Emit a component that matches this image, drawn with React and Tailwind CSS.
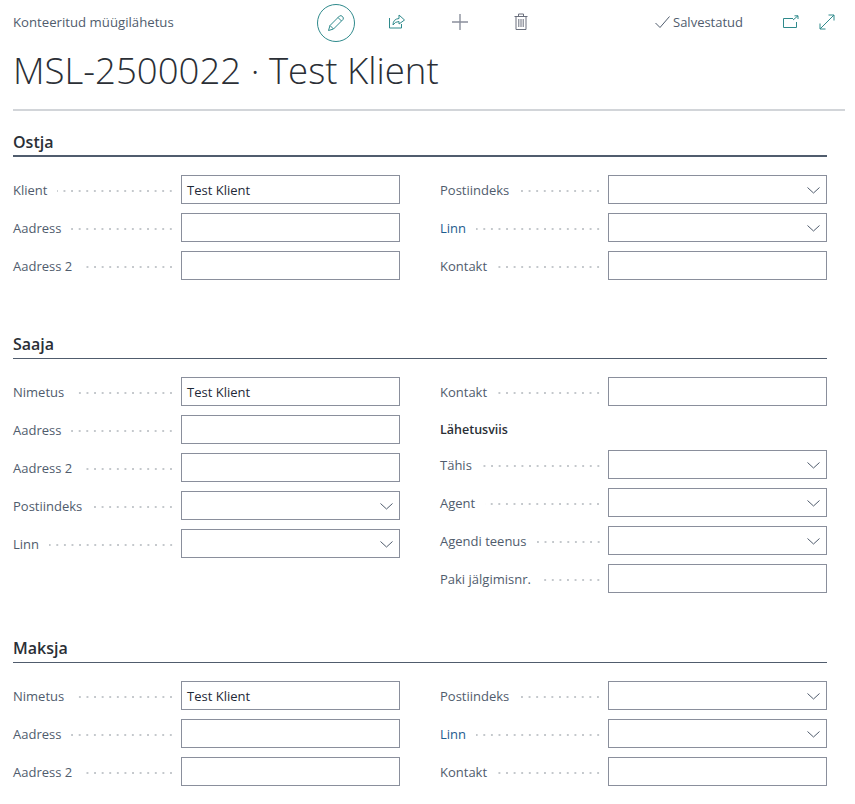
import React from 'react';

const Field = ({ label, value, lookup, link }) => (
    <div className="flex items-center h-[29px] mb-[9px]">
        <div className="w-[168px] shrink-0 flex items-center pr-[6px]">
            <span className={`text-[13px] pt-[2px] whitespace-nowrap ${link ? 'text-[#1d5c8f]' : 'text-[#505c6d]'}`}>{label}</span>
            <span className="flex-1 ml-[10px] mt-[2px] h-[2px] bg-[radial-gradient(circle,#c4c8cc_1px,transparent_1px)] bg-[length:7.6px_2px] bg-right" />
        </div>
        <div className="relative flex-1 h-[29px] border border-[#8a8f9c] flex items-center pl-[5px] text-[13px] text-[#1f2a38]">
            <span className="pt-[2px]">{value}</span>
            {lookup && (
                <svg className="absolute right-[6px] top-[8px]" width="13" height="12" viewBox="0 0 13 12" fill="none" stroke="#505c6d" strokeWidth="1">
                    <path d="M0.5 3.5 L6.5 9 L12.5 3.5" />
                </svg>
            )}
        </div>
    </div>
);

const Section = ({ title, left, right, className, thick }) => (
    <div className={className}>
        <div className={`flex items-end text-[16px] leading-[21px] font-semibold text-[#2b2f36] mb-[18px] border-[#505c6d] ${thick ? 'h-[27px] border-b-2 pb-[2px]' : 'h-[26px] border-b pb-[3px]'}`}>
            {title}
        </div>
        <div className="grid grid-cols-2 gap-x-[40px]">
            <div>{left.map((f, i) => <Field key={i} {...f} />)}</div>
            <div>{right.map((f, i) => (
                f.heading
                    ? <div key={i} className="h-[28px] mb-[7px] pt-[2px] flex items-center text-[12.5px] font-semibold text-[#2b2f36]">{f.heading}</div>
                    : <Field key={i} {...f} />
            ))}</div>
        </div>
    </div>
);

const App = () => {
    return (
        <div className="w-[855px] h-[804px] overflow-hidden bg-white font-['Open_Sans',sans-serif]">
            {/* Header */}
            <div className="ml-[13px] mr-[10px] h-[111px] border-b-2 border-[#d2d5d9]">
                <div className="flex items-center h-[44px] pt-[1px]">
                    <span className="w-[304px] text-[13.2px] text-[#505c6d] pt-[1px]">Konteeritud müügilähetus</span>
                    <div className="w-[38px] h-[38px] rounded-full border border-[#2f8a8c] flex items-center justify-center">
                        <svg width="18" height="18" viewBox="0 0 18 18" fill="none" stroke="#2f8a8c" strokeWidth="1">
                            <path d="M1.5 16.5 L3 11.5 L12.5 2 Q14 1 15.5 2.5 Q17 4 16 5.5 L6.5 15 Z M3 11.5 L6.5 15 M11 3.5 L14.5 7" />
                        </svg>
                    </div>
                    <svg className="ml-[33px] mb-[3px]" width="18" height="18" viewBox="0 0 18 18" fill="none" stroke="#2f8a8c" strokeWidth="1">
                        <path d="M1.5 6 V16 H13.5 V12 M5 13 Q5 7 11 6.5 V3 L16.5 8 L11 12 V9.5 Q7 9.5 5 13 Z" />
                    </svg>
                    <svg className="ml-[45px] mb-[2px]" width="18" height="18" viewBox="0 0 18 18" fill="none" stroke="#8a8f9c" strokeWidth="1.4">
                        <path d="M1 9 H17 M9 1 V17" />
                    </svg>
                    <svg className="ml-[45px] mb-[2px]" width="14" height="18" viewBox="0 0 14 18" fill="none" stroke="#6a6f7c" strokeWidth="1">
                        <path d="M0.5 3.5 H13.5 M4.5 3.5 V1 H9.5 V3.5 M2 3.5 V16.5 H12 V3.5 M4.8 6 V14 M7 6 V14 M9.2 6 V14" />
                    </svg>
                    <svg className="ml-[127px] mb-[2px]" width="15" height="14" viewBox="0 0 15 14" fill="none" stroke="#505c6d" strokeWidth="1">
                        <path d="M0.5 8 L5 12.5 L14.5 1.5" />
                    </svg>
                    <span className="ml-[3px] text-[13px] text-[#505c6d] pt-[1px]">Salvestatud</span>
                    <svg className="ml-[40px] mb-[2px]" width="16" height="14" viewBox="0 0 16 14" fill="none" stroke="#2f8a8c" strokeWidth="1">
                        <path d="M10 3.5 H0.5 V12.5 H13.5 V7 M10 5 L15 0.8 M11.5 0.8 H15 V4" />
                    </svg>
                    <svg className="ml-[20px] mb-[2px]" width="16" height="16" viewBox="0 0 16 16" fill="none" stroke="#2f8a8c" strokeWidth="1">
                        <path d="M1 15 L15 1 M9.5 1 H15 V6.5 M1 9.5 V15 H6.5" />
                    </svg>
                </div>
                <h1 className="text-[36.6px] leading-[50px] text-[#2b2f36] mt-[1px] font-light">MSL-2500022 · Test Klient</h1>
            </div>

            <div className="ml-[13px] w-[814px]">
                <Section
                    thick
                    className="mt-[19px]"
                    title="Ostja"
                    left={[{ label: 'Klient', value: 'Test Klient' }, { label: 'Aadress' }, { label: 'Aadress 2' }]}
                    right={[{ label: 'Postiindeks', lookup: true }, { label: 'Linn', lookup: true, link: true }, { label: 'Kontakt' }]}
                />
                <Section
                    className="mt-[44px]"
                    title="Saaja"
                    left={[{ label: 'Nimetus', value: 'Test Klient' }, { label: 'Aadress' }, { label: 'Aadress 2' }, { label: 'Postiindeks', lookup: true }, { label: 'Linn', lookup: true }]}
                    right={[{ label: 'Kontakt' }, { heading: 'Lähetusviis' }, { label: 'Tähis', lookup: true }, { label: 'Agent', lookup: true }, { label: 'Agendi teenus', lookup: true }, { label: 'Paki jälgimisnr.' }]}
                />
                <Section
                    className="mt-[35px]"
                    title="Maksja"
                    left={[{ label: 'Nimetus', value: 'Test Klient' }, { label: 'Aadress' }, { label: 'Aadress 2' }]}
                    right={[{ label: 'Postiindeks', lookup: true }, { label: 'Linn', lookup: true, link: true }, { label: 'Kontakt' }]}
                />
            </div>
        </div>
    );
};

export default App;
